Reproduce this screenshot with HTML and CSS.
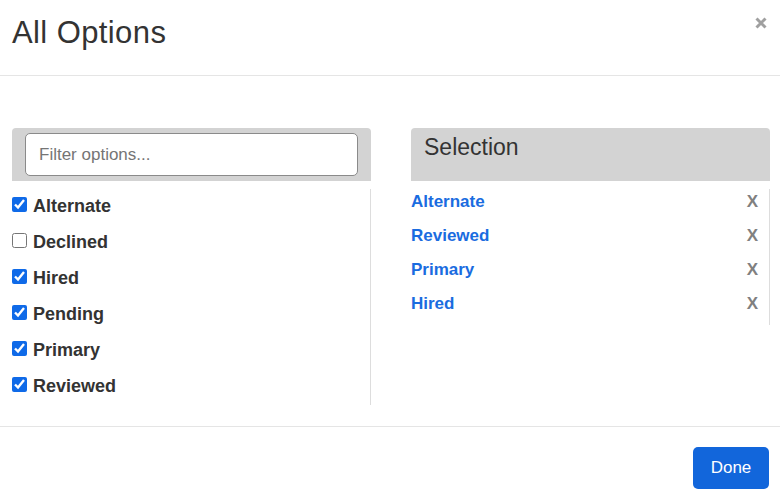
FILE: index.html
```html
<!DOCTYPE html>
<html lang="en">
<head>
    <meta charset="UTF-8">
    <title>All Options</title>
    <link rel="stylesheet" href="styles.css">
</head>
<body>
    <div class="modal">
        <div class="modal-header">
            <h2>All Options</h2>
            <button class="close" title="Close">
                <svg width="12" height="12" viewBox="0 0 12 12"><path d="M1.5 1.5L10.5 10.5M10.5 1.5L1.5 10.5" stroke="#a0a0a0" stroke-width="3"/></svg>
            </button>
        </div>
        <div class="modal-body">
            <div class="column">
                <div class="panel-head">
                    <input type="text" class="filter" placeholder="Filter options...">
                </div>
                <ul class="options">
                    <li><label><input type="checkbox" checked> Alternate</label></li>
                    <li><label><input type="checkbox"> Declined</label></li>
                    <li><label><input type="checkbox" checked> Hired</label></li>
                    <li><label><input type="checkbox" checked> Pending</label></li>
                    <li><label><input type="checkbox" checked> Primary</label></li>
                    <li><label><input type="checkbox" checked> Reviewed</label></li>
                </ul>
            </div>
            <div class="column">
                <div class="panel-head">
                    <h3>Selection</h3>
                </div>
                <ul class="selected">
                    <li><a href="#">Alternate</a><span class="remove">X</span></li>
                    <li><a href="#">Reviewed</a><span class="remove">X</span></li>
                    <li><a href="#">Primary</a><span class="remove">X</span></li>
                    <li><a href="#">Hired</a><span class="remove">X</span></li>
                </ul>
            </div>
        </div>
        <div class="modal-footer">
            <button class="done">Done</button>
        </div>
    </div>
</body>
</html>
```

FILE: styles.css
```css
body {
    margin: 0;
    font-family: "Liberation Sans", Arial, sans-serif;
    color: #333;
    background-color: #fff;
}
.modal {
    width: 780px;
}
.modal-header {
    height: 75px;
    border-bottom: 1px solid #e5e5e5;
    display: flex;
    justify-content: space-between;
    align-items: flex-start;
    padding: 0 12px;
}
.modal-header h2 {
    margin: 0;
    padding-top: 15px;
    font-size: 31px;
    font-weight: normal;
    color: #333;
    letter-spacing: 0.4px;
}
.close {
    border: none;
    background: none;
    padding: 0;
    margin-top: 17px;
    margin-right: 1px;
    cursor: pointer;
    line-height: 0;
}
.modal-body {
    display: grid;
    grid-template-columns: 359px 359px;
    column-gap: 40px;
    padding: 52px 0 20px 12px;
    height: 278px;
}
.panel-head {
    height: 53px;
    background-color: #d3d3d3;
    border-radius: 4px 4px 0 0;
}
.filter {
    box-sizing: border-box;
    width: 333px;
    height: 43px;
    margin: 5px 0 0 13px;
    border: 1px solid #8a8a8a;
    border-radius: 5px;
    padding: 0 13px;
    font-family: "Liberation Sans", Arial, sans-serif;
    font-size: 17px;
    color: #333;
}
.filter::placeholder {
    color: #757575;
}
.panel-head h3 {
    margin: 0;
    padding: 6px 0 0 13px;
    font-size: 23px;
    font-weight: normal;
    color: #333;
}
ul {
    list-style: none;
    margin: 8px 0 0 0;
    padding: 0;
    border-right: 1px solid #ddd;
}
.options li {
    height: 36px;
    display: flex;
    align-items: center;
}
.options label {
    display: flex;
    align-items: center;
    font-size: 18px;
    font-weight: bold;
    color: #333;
    margin-top: -2px;
}
.options input {
    width: 15px;
    height: 15px;
    margin: 0 6px 4px 0;
    accent-color: #0f6ae8;
}
.selected li {
    height: 34px;
    display: flex;
    justify-content: space-between;
    align-items: center;
    padding-right: 11px;
}
.selected a {
    margin-top: -8px;
    font-size: 17px;
    font-weight: bold;
    color: #1a6ce0;
    text-decoration: none;
}
.selected .remove {
    margin-top: -8px;
    font-size: 17px;
    font-weight: bold;
    color: #808080;
}
.modal-footer {
    border-top: 1px solid #e5e5e5;
    display: flex;
    justify-content: flex-end;
    padding: 20px 11px 0 0;
}
.done {
    width: 76px;
    height: 42px;
    border: none;
    border-radius: 5px;
    background-color: #1266db;
    color: #fff;
    font-family: "Liberation Sans", Arial, sans-serif;
    font-size: 17px;
    cursor: pointer;
}
```
